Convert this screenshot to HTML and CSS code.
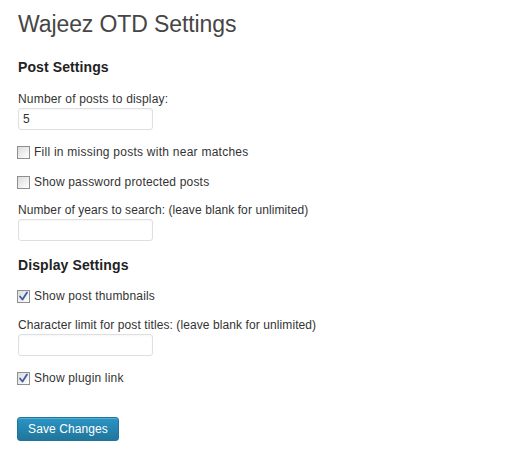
FILE: index.html
```html
<!DOCTYPE html>
<html>
<head>
<meta charset="utf-8">
<link rel="stylesheet" href="styles.css">
</head>
<body>
<div class="wrap">
  <h1 class="title">Wajeez OTD Settings</h1>

  <h3 class="section first">Post Settings</h3>
  <div class="field f1">
    <label class="label">Number of posts to display:</label>
    <div class="input">5</div>
  </div>
  <div class="check c1">
    <span class="box"></span><span class="wide">Fill in missing posts with near matches</span>
  </div>
  <div class="check c2">
    <span class="box"></span><span>Show password protected posts</span>
  </div>
  <div class="field f2">
    <label class="label long">Number of years to search: (leave blank for unlimited)</label>
    <div class="input"></div>
  </div>

  <h3 class="section second">Display Settings</h3>
  <div class="check c3">
    <span class="box checked"><svg viewBox="0 0 11 11" width="11" height="11"><path d="M2 5.5 L4.5 8.5 L9 1.5" fill="none" stroke="#3f5d9b" stroke-width="1.8" stroke-linecap="round" stroke-linejoin="round"/></svg></span><span>Show post thumbnails</span>
  </div>
  <div class="field f3">
    <label class="label long">Character limit for post titles: (leave blank for unlimited)</label>
    <div class="input"></div>
  </div>
  <div class="check c4">
    <span class="box checked"><svg viewBox="0 0 11 11" width="11" height="11"><path d="M2 5.5 L4.5 8.5 L9 1.5" fill="none" stroke="#3f5d9b" stroke-width="1.8" stroke-linecap="round" stroke-linejoin="round"/></svg></span><span>Show plugin link</span>
  </div>

  <div class="actions">
    <button class="button">Save Changes</button>
  </div>
</div>
</body>
</html>
```
FILE: styles.css
```css
html, body {
  margin: 0;
  padding: 0;
  background: #ffffff;
}
body {
  font-family: "Liberation Sans", Arial, sans-serif;
  font-size: 12px;
  color: #333333;
  letter-spacing: 0.18px;
}
.wrap {
  padding: 0 18px;
}
.title {
  margin: 10px 0 0;
  font-size: 23px;
  font-weight: normal;
  line-height: 29px;
  color: #464646;
  letter-spacing: -0.1px;
}
.section {
  margin: 0;
  font-size: 14px;
  font-weight: bold;
  line-height: 18px;
  color: #222222;
  letter-spacing: 0.1px;
}
.section.first { margin-top: 19px; }
.section.second { margin-top: 15px; }
.field .label {
  display: block;
  line-height: 18px;
}
.field .label.long { letter-spacing: 0.09px; }
.f1 { margin-top: 14px; }
.f2 { margin-top: 10px; }
.f3 { margin-top: 11px; }
.input {
  box-sizing: border-box;
  width: 135px;
  height: 22px;
  border: 1px solid #dfdfdf;
  border-radius: 3px;
  box-shadow: inset 0 1px 2px rgba(0,0,0,0.04);
  padding: 0 4px;
  line-height: 20px;
  font-size: 12px;
  color: #333;
}
.check {
  display: flex;
  align-items: center;
  gap: 4px;
  height: 18px;
  margin-left: -1px;
}
.wide { letter-spacing: 0.25px; }
.c1 { margin-top: 13px; }
.c2 { margin-top: 12px; }
.c3 { margin-top: 13px; }
.c4 { margin-top: 13px; }
.box {
  box-sizing: border-box;
  width: 13px;
  height: 13px;
  border: 1px solid #8f8f8f;
  background: linear-gradient(135deg, #dcdcdc 0%, #f4f4f4 70%, #ffffff 100%);
  display: flex;
  align-items: center;
  justify-content: center;
  flex: none;
}
.box svg { display: block; }
.actions {
  margin-top: 30px;
}
.button {
  box-sizing: border-box;
  width: 102px;
  height: 24px;
  margin-left: -1px;
  padding: 0;
  border: 1px solid #21759b;
  border-radius: 3px;
  background: linear-gradient(to bottom, #2a95c5 0%, #21759b 100%);
  box-shadow: inset 0 1px 0 rgba(120,200,230,0.5);
  color: #ffffff;
  font-family: "Liberation Sans", Arial, sans-serif;
  font-size: 12px;
  line-height: 22px;
  letter-spacing: 0.1px;
}
```
